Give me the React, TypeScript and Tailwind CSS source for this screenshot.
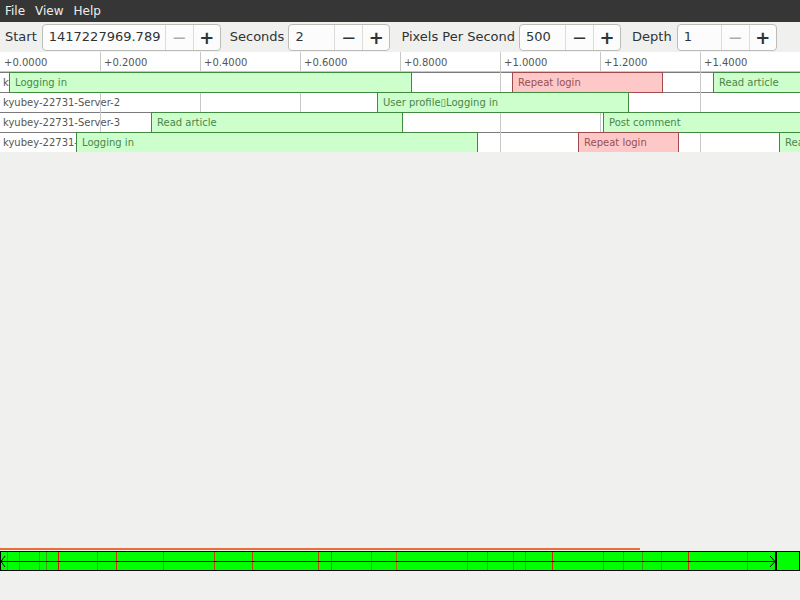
import React from 'react';

type Ev = { left: number; right: number; label: string; kind: 'ok' | 'bad' };

const rows: { name: string; events: Ev[] }[] = [
    {
        name: 'kyubey-22731-Server-1',
        events: [
            { left: 9, right: 411, label: 'Logging in', kind: 'ok' },
            { left: 512, right: 662, label: 'Repeat login', kind: 'bad' },
            { left: 713, right: 900, label: 'Read article', kind: 'ok' },
        ],
    },
    {
        name: 'kyubey-22731-Server-2',
        events: [{ left: 377, right: 628, label: 'User profile\u25AFLogging in', kind: 'ok' }],
    },
    {
        name: 'kyubey-22731-Server-3',
        events: [
            { left: 151, right: 402, label: 'Read article', kind: 'ok' },
            { left: 603, right: 900, label: 'Post comment', kind: 'ok' },
        ],
    },
    {
        name: 'kyubey-22731-Server-4',
        events: [
            { left: 76, right: 477, label: 'Logging in', kind: 'ok' },
            { left: 578, right: 678, label: 'Repeat login', kind: 'bad' },
            { left: 779, right: 900, label: 'Read article', kind: 'ok' },
        ],
    },
];

const ticks = [0, 100, 200, 300, 400, 500, 600, 700];

// overview markers: [x, colour]
const marks: [number, string][] = [
    [7, '#3aa010'], [19, '#3aa010'], [39, '#3aa010'], [46, '#3aa010'], [58, '#e01010'],
    [97, '#3aa010'], [116, '#c83010'], [163, '#3aa010'], [214, '#b84a10'], [252, '#b84a10'],
    [318, '#b84a10'], [331, '#b84a10'], [371, '#a07010'], [396, '#a07010'], [467, '#a07010'],
    [487, '#a07010'], [513, '#3aa010'], [525, '#3aa010'], [552, '#c83010'], [603, '#3aa010'],
    [623, '#3aa010'], [642, '#3aa010'], [661, '#3aa010'], [688, '#c83010'], [747, '#3aa010'],
];

const SpinBox: React.FC<{ value: string; width: string; minusOff?: boolean }> = ({ value, width, minusOff }) => (
    <div className="flex h-[27px] items-stretch rounded-[4px] border border-[#bdbdb8] bg-[#fcfcfc]">
        <div className={`${width} flex items-center pl-[6px] text-[13px] text-[#2e3436]`}>{value}</div>
        <div className={`flex w-[28px] items-center justify-center border-l border-[#dcdcd8] text-[18px] ${minusOff ? 'text-[#b0ada8]' : 'text-[#2e3436]'}`}>
            −
        </div>
        <div className="flex w-[27px] items-center justify-center border-l border-[#dcdcd8] text-[18px] font-bold text-[#2e3436]">
            +
        </div>
    </div>
);

const App: React.FC = () => {
    return (
        <div className="flex h-screen w-[800px] flex-col overflow-hidden bg-[#f0f0ee] font-['DejaVu_Sans',sans-serif]">
            {/* Menu bar */}
            <div className="flex h-[22px] shrink-0 items-center gap-[10px] bg-[#363636] pl-[5px] text-[12px] text-[#eeeeec]">
                <span>File</span>
                <span>View</span>
                <span>Help</span>
            </div>

            {/* Toolbar */}
            <div className="flex h-[30px] shrink-0 items-center pl-[5px] text-[13px] text-[#2e3436]">
                <span>Start</span>
                <div className="ml-[5px]"><SpinBox value="1417227969.789" width="w-[122px]" minusOff /></div>
                <span className="ml-[9px]">Seconds</span>
                <div className="ml-[4px]"><SpinBox value="2" width="w-[45px]" /></div>
                <span className="ml-[11px]">Pixels Per Second</span>
                <div className="ml-[4px]"><SpinBox value="500" width="w-[45px]" /></div>
                <span className="ml-[11px]">Depth</span>
                <div className="ml-[5px]"><SpinBox value="1" width="w-[43px]" minusOff /></div>
            </div>

            {/* Timeline */}
            <div className="relative h-[100px] w-[800px] shrink-0 overflow-hidden bg-white text-[10px]">
                <div className="relative h-[20px] border-b border-[#c8c8c8]">
                    {ticks.map((t) => (
                        <div key={t} className="absolute top-0 flex h-[20px] items-center pl-[4px] text-[#555753]" style={{ left: t }}>
                            +{(t / 500).toFixed(4)}
                        </div>
                    ))}
                </div>
                {rows.map((row) => (
                    <div key={row.name} className="relative h-[20px] border-t border-[#7a7a7a]">
                        <div className="absolute left-0 top-0 flex h-[19px] items-center pl-[3px] text-[#555753]">{row.name}</div>
                        {row.events.map((ev) => (
                            <div
                                key={ev.left}
                                className={`absolute top-[-1px] z-10 flex h-[21px] items-center overflow-hidden whitespace-nowrap border pl-[5px] ${
                                    ev.kind === 'ok'
                                        ? 'border-[#3f8a3f] bg-[#ccffcc] text-[#4a864a]'
                                        : 'border-[#a04a4a] bg-[#ffc8c8] text-[#985050]'
                                }`}
                                style={{ left: ev.left, width: ev.right - ev.left + 1 }}
                            >
                                {ev.label}
                            </div>
                        ))}
                    </div>
                ))}
                {/* grid lines */}
                {ticks.slice(1).map((t) => (
                    <div key={t} className="pointer-events-none absolute top-0 h-[100px] w-px bg-[#c8c8c8]" style={{ left: t }} />
                ))}
            </div>

            <div className="flex-1" />

            {/* Overview */}
            <div className="h-[2px] w-[640px] shrink-0 bg-[#ea6e3a]" />
            <div className="h-px shrink-0" />
            <svg width="800" height="20" className="block shrink-0">
                <rect x="0" y="0" width="800" height="20" fill="#00ff00" />
                {marks.map(([x, c]) => (
                    <line key={x} x1={x + 0.5} y1="0" x2={x + 0.5} y2="20" stroke={c} strokeWidth="1" />
                ))}
                <rect x="0.5" y="0.5" width="799" height="19" fill="none" stroke="#000" strokeWidth="1" />
                <line x1="0" y1="10.5" x2="776" y2="10.5" stroke="#000" strokeWidth="1" />
                <line x1="776" y1="0" x2="776" y2="20" stroke="#000" strokeWidth="2" />
                <path d="M5 5 L1 10.5 L5 16" fill="none" stroke="#000" strokeWidth="1" />
                <path d="M770 5 L775 10.5 L770 16" fill="none" stroke="#000" strokeWidth="1" />
            </svg>
            <div className="h-[29px] shrink-0" />
        </div>
    );
};

export default App;
